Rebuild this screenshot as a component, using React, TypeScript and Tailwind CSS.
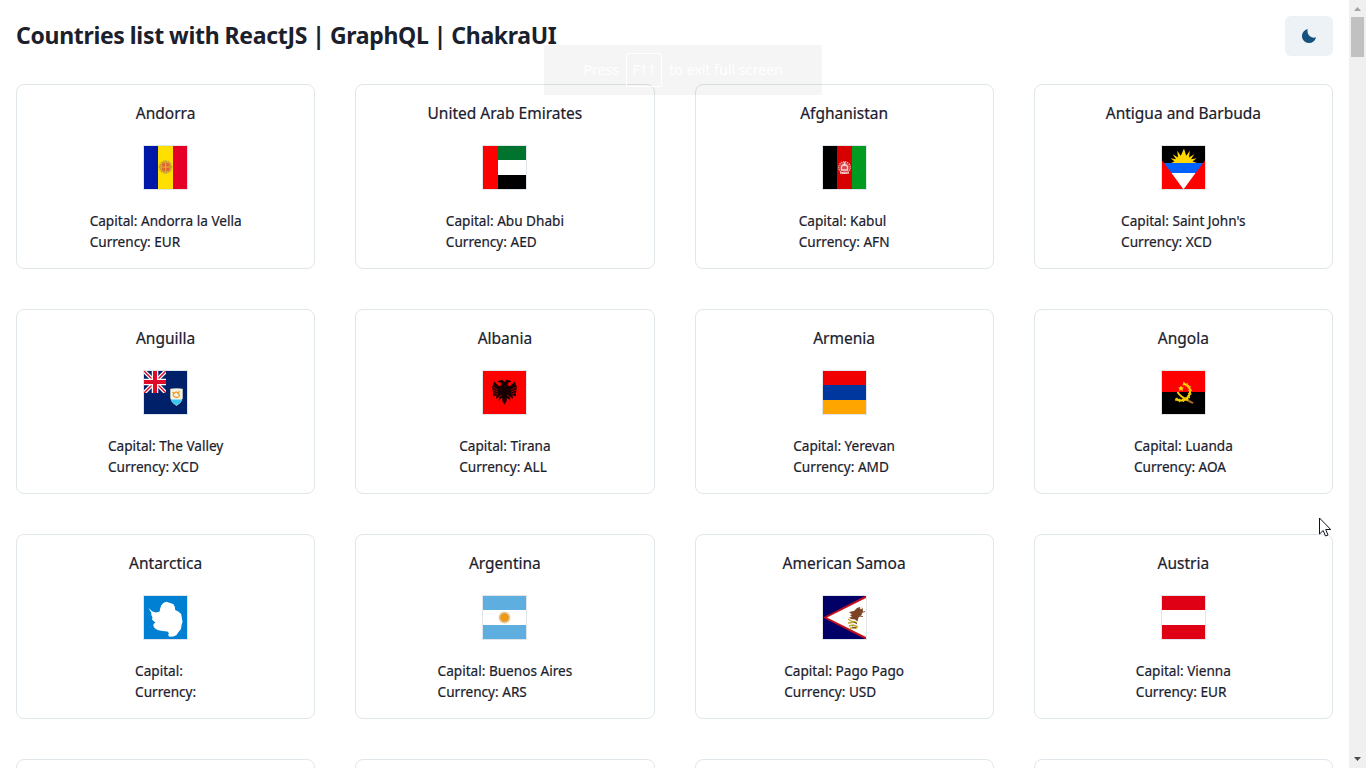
import type { ReactNode } from 'react';

interface Country {
  name: string;
  capital: string;
  currency: string;
  flag: ReactNode;
}

const stripesV = (a: string, b: string, c: string) => (
  <g shapeRendering="crispEdges">
    <rect width="14" height="43" fill={a} />
    <rect x="14" width="15" height="43" fill={b} />
    <rect x="29" width="14" height="43" fill={c} />
  </g>
);

const stripesH = (a: string, b: string, c: string) => (
  <g shapeRendering="crispEdges">
    <rect width="43" height="14" fill={a} />
    <rect y="14" width="43" height="15" fill={b} />
    <rect y="29" width="43" height="14" fill={c} />
  </g>
);

const countries: Country[] = [
  {
    name: 'Andorra', capital: 'Andorra la Vella', currency: 'EUR',
    flag: (
      <>
        {stripesV('#0018a8', '#fedf00', '#e60026')}
        <circle cx="21.5" cy="21" r="6" fill="#d5a52c" stroke="#c09a48" strokeWidth="1.5" strokeDasharray="1.5 1" />
        <rect x="18" y="17" width="7.5" height="8" rx="2" fill="#e0662c" />
        <path d="M21.7 17v8M18 21h7.5" stroke="#e9b53a" />
      </>
    ),
  },
  {
    name: 'United Arab Emirates', capital: 'Abu Dhabi', currency: 'AED',
    flag: (
      <g shapeRendering="crispEdges">
        {stripesH('#00732f', '#ffffff', '#000000')}
        <rect width="15" height="43" fill="#ff0000" />
      </g>
    ),
  },
  {
    name: 'Afghanistan', capital: 'Kabul', currency: 'AFN',
    flag: (
      <>
        {stripesV('#000000', '#d60000', '#009b20')}
        <circle cx="21.5" cy="21.5" r="5" fill="#e8a0a0" fillOpacity=".45" />
        <g fill="none" stroke="#fff" strokeOpacity=".75">
          <circle cx="21.5" cy="21.5" r="5.800" strokeWidth="1.300" strokeDasharray="1.300 .8" />
          <path d="M18.5 24v-3.500q3-4 6 0V24zM17 27h9M21.500 16v4" strokeWidth="1.300" />
        </g>
      </>
    ),
  },
  {
    name: 'Antigua and Barbuda', capital: "Saint John's", currency: 'XCD',
    flag: (
      <>
        <rect width="43" height="43" fill="#f00" />
        <path d="M0 0h43v14.500L41 17H2L0 14.500z" fill="#000" />
        <path d="M9 17l3.500-1.500-4-3.200 5.500 1-3.300-5 5.300 3.200-.8-6.700 3.600 5L22 2.500l2.200 7.300 3.600-5-.8 6.700 5.300-3.200-3.300 5 5.500-1-4 3.200L35 17z" fill="#ffd600" />
        <path d="M2 17h39l-7.500 10h-24z" fill="#0061ff" />
        <path d="M9.500 27h24l-11.700 16h-.6z" fill="#fff" />
      </>
    ),
  },
  {
    name: 'Anguilla', capital: 'The Valley', currency: 'XCD',
    flag: (
      <>
        <rect width="43" height="43" fill="#00206a" />
        <svg width="22" height="22" viewBox="0 0 22 22">
          <path d="M0 0l22 22M22 0L0 22" stroke="#fff" strokeWidth="4" />
          <path d="M0 0l22 22M22 0L0 22" stroke="#d8102e" strokeWidth="1.500" />
          <path d="M11 0v22M0 11h22" stroke="#fff" strokeWidth="6.500" />
          <path d="M11 0v22M0 11h22" stroke="#e00b28" strokeWidth="4" />
        </svg>
        <path d="M26.500 18q6-1 12 0v9q-1 5-6 7.500-5-2.500-6-7.500z" fill="#f4f5e8" stroke="#d8d4b8" strokeWidth=".6" />
        <path d="M27 28.500h11q-1 3.500-5.500 5.500-4.500-2-5.500-5.500" fill="#38c7ee" />
        <path d="M29.500 25q-1-3 3-4 3 1 3 4-2 3-6 0zM28.500 21l2 2M35.500 20l-2 3" stroke="#ef9c28" strokeWidth="1.300" fill="none" />
      </>
    ),
  },
  {
    name: 'Albania', capital: 'Tirana', currency: 'ALL',
    flag: (
      <>
        <rect width="43" height="43" fill="#f00" />
        <path d="M21.500 11l-2-2.200-3.500.7-1.500 1.500 3 .3 1 3-2.500 1-5-5-.8 4-1 .5.500 5 .8 6 3-2-.5 4 3.500-2-1 4 3.500-3 .5 3.500 2 3.500 2-3.500.5-3.500 3.500 3-1-4 3.500 2-.5-4 3 2 .8-6 .5-5-1-.5-.8-4-5 5-2.500-1 1-3 3-.3-1.500-1.500-3.500-.7z" fill="#190000" />
        <path d="M10 16l5 3M10 19l5 2M11 22l4 1M33 16l-5 3M33 19l-5 2M32 22l-4 1M16 26l3-2M27 26l-3-2" stroke="#c00" strokeWidth=".8" />
      </>
    ),
  },
  { name: 'Armenia', capital: 'Yerevan', currency: 'AMD', flag: stripesH('#f00000', '#00379f', '#ffa500') },
  {
    name: 'Angola', capital: 'Luanda', currency: 'AOA',
    flag: (
      <>
        <rect width="43" height="43" fill="#f00" />
        <rect y="21" width="43" height="22" fill="#000" />
        <path d="M21 12.500q8 2 7 9-1 7-8.500 8-3.500.2-6-2" fill="none" stroke="#ffe000" strokeWidth="2" />
        <path d="M21 12.500q8 2 7 9-1 7-8.500 8-3.500.2-6-2" fill="none" stroke="#eebb00" strokeWidth="3.600" strokeDasharray="1.300 2" />
        <path d="M15.500 21q3 5 11 8.500" fill="none" stroke="#f5c800" strokeWidth="2" />
        <path d="M26 29.500l5 2.700" stroke="#a56b20" strokeWidth="2" />
        <path d="M19 14.500l.9 1.800 2 .3-1.400 1.400.3 2-1.800-1-1.800 1 .3-2-1.400-1.400 2-.3z" fill="#ffd700" />
      </>
    ),
  },
  {
    name: 'Antarctica', capital: '', currency: '',
    flag: (
      <>
        <rect width="43" height="43" fill="#0080d2" />
        <path d="M4.500 12l4 3.500 2 .5 1 .5 4-.8.700-3.200 1-3 2-2.500 3-1.300 4 1.200 3 1.200 1.500 2.300.5 3.500 3 1.500 3 2.500.8 5 .5 3-1 3-.5 4-2.500 3-2 3-3 1.500-4 .3-1.500-1.800 1-1.500-1.500-2-5-.3-5-1-3-2-1.300-2.500.8-2 1.500-1-2-1.500-1.500-1.500.5-2L7.500 19.500l-.3-3z" fill="#fff" />
      </>
    ),
  },
  {
    name: 'Argentina', capital: 'Buenos Aires', currency: 'ARS',
    flag: (
      <>
        {stripesH('#5eaedf', '#ffffff', '#5eaedf')}
        <circle cx="21.500" cy="21.500" r="5.500" fill="#e9b96f" stroke="#e8cfa2" strokeWidth="1.300" strokeDasharray="1 1" />
        <circle cx="21.500" cy="21.500" r="3.500" fill="#f59a0c" stroke="#b77b25" strokeWidth=".8" strokeDasharray="1 1" />
      </>
    ),
  },
  {
    name: 'American Samoa', capital: 'Pago Pago', currency: 'USD',
    flag: (
      <>
        <rect width="43" height="43" fill="#000066" />
        <path d="M43-.500L0 21.500 43 43.500z" fill="#c40d1c" />
        <path d="M43 2L4 21.500 43 41z" fill="#fff" />
        <path d="M26 16l5-1 3-3 3-1 2.500 1 .5 3-1.500 4-3 2.500-1 4-2.500-2-4-.5-2-1.500 3-.5-2-2 2-.5z" fill="#7d4221" />
        <path d="M37 17l5-1.500M36 20l4 .5" stroke="#8d5533" />
        <path d="M25 23l4 2.500 5 1M25 27l8-1M26 30l4-1 5 2M27 32h7" stroke="#c6a32e" strokeWidth="1.400" fill="none" />
        <path d="M31 26l3 2M29 31l4 1" stroke="#5c471c" />
        <circle cx="38" cy="12" r="1.200" fill="#eee5dd" />
      </>
    ),
  },
  { name: 'Austria', capital: 'Vienna', currency: 'EUR', flag: stripesH('#df0016', '#ffffff', '#df0016') },
];

const cardFrame = 'flex h-[185px] flex-col items-center rounded-lg border border-[#dfe7ea] px-4 pt-4';

function CountryCard({ name, capital, currency, flag }: Country) {
  return (
    <article className={cardFrame}>
      <h2 className="text-[15.5px] leading-6 whitespace-nowrap [-webkit-text-stroke:0.2px_currentColor]">{name}</h2>
      <svg className="mt-5 size-[45px] shrink-0 border border-[#dfe5e8]" viewBox="0 0 43 43">{flag}</svg>
      <div className="mt-5 text-[13.6px] leading-[21px] whitespace-nowrap [-webkit-text-stroke:0.2px_currentColor]">
        <p>Capital: {capital}</p>
        <p>Currency: {currency}</p>
      </div>
    </article>
  );
}

function Scrollbar() {
  return (
    <div className="flex w-[17px] shrink-0 flex-col items-center bg-[#f0f0f0]">
      <svg className="h-[17px] w-[17px] shrink-0" viewBox="0 0 17 17"><path d="M5 11l3.500-4L12 11z" fill="#a3a3a3" /></svg>
      <div className="h-10 w-[13px] bg-[#c1c1c1]" />
      <svg className="mt-auto h-[17px] w-[17px] shrink-0" viewBox="0 0 17 17"><path d="M5 6l3.500 4L12 6z" fill="#504b4b" /></svg>
    </div>
  );
}

export default function App() {
  return (
    <div className="relative flex h-screen overflow-hidden bg-white font-['Noto_Sans','Open_Sans',sans-serif] text-[#1a202c]">
      <main className="min-w-0 flex-1 overflow-hidden p-4">
        <header className="flex h-10 items-center justify-between">
          <h1 className="pb-0.5 text-[23px] leading-9 font-bold tracking-[-0.32px] whitespace-nowrap [word-spacing:-0.4px]">Countries list with ReactJS | GraphQL | ChakraUI</h1>
          <button className="flex h-10 w-12 items-center justify-center rounded-md bg-[#edf2f7]" aria-label="Toggle color mode">
            <svg className="size-4" viewBox="0 0 16 16"><path d="M6.700 1A7.100 7.100 0 1 0 15 9.200C11 11 5.200 7 6.700 1z" fill="#15517d" /></svg>
          </button>
        </header>
        <section className="mt-7 grid grid-cols-4 gap-10">
          {countries.map((country) => <CountryCard key={country.name} {...country} />)}
          {[0, 1, 2, 3].map((slot) => <div key={slot} className={cardFrame} />)}
        </section>
      </main>
      <Scrollbar />
      <div className="absolute top-[45px] left-[544px] flex h-[50px] w-[278px] items-center justify-center gap-[7px] bg-black/4 text-[14.2px] whitespace-nowrap text-white">
        <span>Press</span>
        <kbd className="flex h-[34px] w-9 items-center justify-center rounded-xs border border-white font-['Noto_Sans',sans-serif]">F11</kbd>
        <span>to exit full screen</span>
      </div>
      <svg className="absolute top-[517px] left-[1319px] h-5 w-3" viewBox="0 0 12 20">
        <path d="M.500 1v16l3.700-3.500L6.500 19l2.500-1-2.300-5.500h5z" fill="#fff" stroke="#111120" strokeWidth="1" />
      </svg>
    </div>
  );
}
